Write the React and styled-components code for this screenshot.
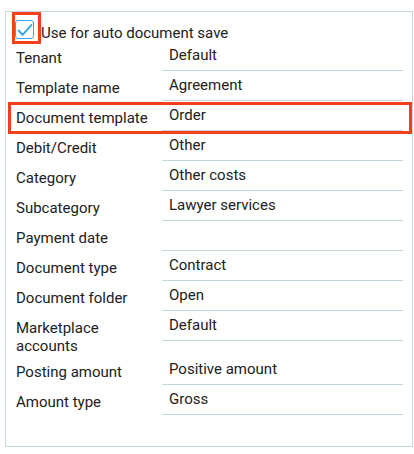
import React from "react";
import styled, { createGlobalStyle } from "styled-components";

const GlobalStyle = createGlobalStyle`
  body {
    margin: 0;
    background: #ffffff;
    font-family: Roboto, "Liberation Sans", Arial, sans-serif;
    color: #212121;
  }
`;

const Panel = styled.section`
  margin: 11px 1px 7px 5px;
  height: 436px;
  box-sizing: border-box;
  border: 1px solid #c9d8de;
  padding: 1px 0 0 0;
  font-size: 15px;
  line-height: 18px;
`;

const CheckRow = styled.label`
  display: flex;
  align-items: flex-end;
  margin: 0 0 -3px 6px;
  height: 31px;
  cursor: pointer;
`;

const Marked = styled.span`
  display: inline-flex;
  align-items: flex-start;
  box-sizing: border-box;
  width: 29px;
  height: 32px;
  border: 3px solid #f2401d;
  padding: 5px 4px 0 0;
`;

const Box = styled.span`
  display: inline-flex;
  align-items: center;
  justify-content: center;
  box-sizing: border-box;
  width: 19px;
  height: 19px;
  border: 1.5px solid #35a6e8;
  border-radius: 3px;
`;

const CheckText = styled.span`
  margin: 0 0 2px 0;
`;

const Row = styled.div`
  position: relative;
  display: grid;
  grid-template-columns: 156px 241px;

  &::after {
    content: "";
    display: ${(p) => (p.$marked ? "block" : "none")};
    position: absolute;
    left: 2px;
    right: 0;
    top: 1px;
    bottom: -3px;
    border: 3px solid #f2401d;
    pointer-events: none;
  }
`;

const Label = styled.div`
  padding: 9px 0 0 10px;
  min-height: 30px;
  box-sizing: border-box;
  line-height: 17.5px;
`;

const Value = styled.div`
  height: 30px;
  box-sizing: border-box;
  padding: 5px 0 0 7px;
  border-bottom: 1px solid #c3d6de;
`;

const rows = [
  ["Tenant", "Default"],
  ["Template name", "Agreement"],
  ["Document template", "Order", true],
  ["Debit/Credit", "Other"],
  ["Category", "Other costs"],
  ["Subcategory", "Lawyer services"],
  ["Payment date", ""],
  ["Document type", "Contract"],
  ["Document folder", "Open"],
  ["Marketplace accounts", "Default"],
  ["Posting amount", "Positive amount"],
  ["Amount type", "Gross"],
];

export default function App() {
  return (
    <>
      <GlobalStyle />
      <Panel>
        <CheckRow>
          <Marked>
            <Box>
              <svg width="16" height="14" viewBox="0 0 16 14">
                <path
                  d="M1.2 7 L5.6 11.8 L15 1.4"
                  fill="none"
                  stroke="#35a6e8"
                  strokeWidth="2"
                  strokeLinejoin="miter"
                />
              </svg>
            </Box>
          </Marked>
          <CheckText>Use for auto document save</CheckText>
        </CheckRow>

        {rows.map(([label, value, marked]) => (
          <Row key={label} $marked={marked}>
            <Label>{label}</Label>
            <Value>{value}</Value>
          </Row>
        ))}
      </Panel>
    </>
  );
}
